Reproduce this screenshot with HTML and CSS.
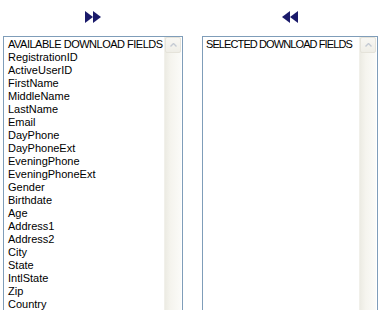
FILE: index.html
```html
<!DOCTYPE html>
<html>
<head>
<meta charset="utf-8">
<link rel="stylesheet" href="styles.css">
</head>
<body>
<div class="wrap">
  <div class="col col-left">
    <button class="move" title="Add">
      <svg width="16" height="12" viewBox="0 0 16 12"><polygon points="0,0 8,6 0,12"/><polygon points="8,0 16,6 8,12"/></svg>
    </button>
    <div class="listbox">
      <ul class="items">
        <li class="head">AVAILABLE DOWNLOAD FIELDS</li>
        <li>RegistrationID</li>
        <li>ActiveUserID</li>
        <li>FirstName</li>
        <li>MiddleName</li>
        <li>LastName</li>
        <li>Email</li>
        <li>DayPhone</li>
        <li>DayPhoneExt</li>
        <li>EveningPhone</li>
        <li>EveningPhoneExt</li>
        <li>Gender</li>
        <li>Birthdate</li>
        <li>Age</li>
        <li>Address1</li>
        <li>Address2</li>
        <li>City</li>
        <li>State</li>
        <li>IntlState</li>
        <li>Zip</li>
        <li>Country</li>
      </ul>
      <div class="scrollbar">
        <div class="scroll-btn">
          <svg width="7" height="4" viewBox="0 0 7 4"><polyline points="0.5,3.5 3.5,0.5 6.5,3.5" fill="none" stroke-width="1.4"/></svg>
        </div>
      </div>
    </div>
  </div>
  <div class="col col-right">
    <button class="move" title="Remove">
      <svg width="16" height="12" viewBox="0 0 16 12"><polygon points="8,0 0,6 8,12"/><polygon points="16,0 8,6 16,12"/></svg>
    </button>
    <div class="listbox">
      <ul class="items items-right">
        <li class="head head-right">SELECTED DOWNLOAD FIELDS</li>
      </ul>
      <div class="scrollbar">
        <div class="scroll-btn">
          <svg width="7" height="4" viewBox="0 0 7 4"><polyline points="0.5,3.5 3.5,0.5 6.5,3.5" fill="none" stroke-width="1.4"/></svg>
        </div>
      </div>
    </div>
  </div>
</div>
</body>
</html>
```
FILE: styles.css
```css
html, body {
  margin: 0;
  padding: 0;
  background: #ffffff;
  overflow: hidden;
}
body {
  font-family: "Liberation Sans", Arial, sans-serif;
  font-size: 11px;
  color: #000;
}
.wrap {
  display: flex;
  gap: 19px;
  padding-left: 3px;
  padding-top: 11px;
}
.col {
  display: flex;
  flex-direction: column;
  align-items: center;
}
.col-left { width: 180px; }
.col-right { width: 176px; }
.move {
  border: 0;
  background: none;
  padding: 0;
  margin: 0 0 13px 0;
  width: 16px;
  height: 12px;
  display: block;
  cursor: pointer;
}
.move svg {
  display: block;
  fill: #1a1a6a;
}
.listbox {
  align-self: stretch;
  height: 274px;
  border: 1px solid #7f9db9;
  display: flex;
  background: #fff;
}
.items {
  flex: 1;
  list-style: none;
  margin: 0;
  padding: 1px 0 0 4px;
  overflow: hidden;
}
.items-right {
  padding-left: 3px;
}
.items li {
  line-height: 13px;
  height: 13px;
  white-space: nowrap;
}
.items li.head {
  letter-spacing: -0.5px;
}
.items li.head-right {
  letter-spacing: -0.9px;
}
.scrollbar {
  width: 16px;
  margin-right: 1px;
  background: linear-gradient(to right, #ecebe3 0%, #f5f4ee 35%, #fbfbf8 100%);
  border-left: 1px solid #f1f0ea;
  display: flex;
  flex-direction: column;
}
.scroll-btn {
  box-sizing: border-box;
  height: 16px;
  border: 1px solid #e5e3da;
  border-radius: 2px;
  background: linear-gradient(#f8f7f3, #efeee7);
  display: flex;
  align-items: center;
  justify-content: center;
}
.scroll-btn svg {
  display: block;
  stroke: #c4cad3;
}
```
